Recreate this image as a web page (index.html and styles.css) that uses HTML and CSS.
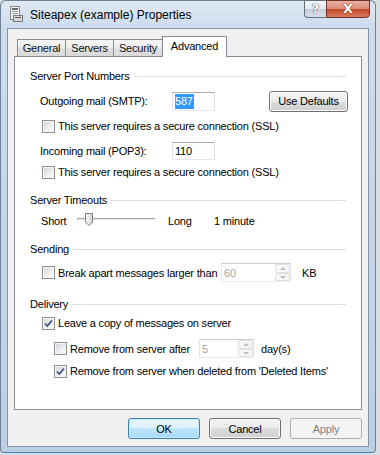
FILE: index.html
```html
<!DOCTYPE html>
<html>
	<head>
		<meta charset="UTF-8">
		<title>Siteapex (example) Properties</title>
		<link rel="stylesheet" href="styles.css">
	</head>
	<body>
		<div class="window">
			<div class="titlebar">
				<svg class="app-icon" width="13" height="16" viewBox="0 0 13 16">
					<rect x="0.5" y="0.5" width="9" height="13" fill="#f4f4f4" stroke="#8a8a8a"/>
					<rect x="2" y="2" width="6" height="2" fill="#6a6a6a"/>
					<rect x="2" y="5" width="6" height="1" fill="#9a9a9a"/>
					<rect x="2" y="7" width="6" height="1" fill="#9a9a9a"/>
					<rect x="3.5" y="9.5" width="9" height="6" fill="#d8d8d8" stroke="#7a7a7a"/>
					<rect x="5" y="11" width="6" height="1" fill="#5a5a5a"/>
				</svg>
				<span class="title">Siteapex (example) Properties</span>
				<div class="caption">
					<span class="cap-help">?</span>
					<span class="cap-close">X</span>
				</div>
			</div>
			<div class="client">
				<div class="tabs">
					<span class="tab tab-general">General</span>
					<span class="tab tab-servers">Servers</span>
					<span class="tab tab-security">Security</span>
					<span class="tab tab-advanced active">Advanced</span>
				</div>
				<div class="panel">
					<div class="group-head">Server Port Numbers</div>
					<div class="row row-smtp">
						<span class="port-label">Outgoing mail (SMTP):</span>
						<span class="field port"><span class="sel">587</span></span>
						<button class="btn btn-defaults">Use Defaults</button>
					</div>
					<div class="row check-row row-ssl1">
						<span class="cb"></span>
						<span>This server requires a secure connection (SSL)</span>
					</div>
					<div class="row row-pop">
						<span class="port-label">Incoming mail (POP3):</span>
						<span class="field port">110</span>
					</div>
					<div class="row check-row row-ssl2">
						<span class="cb"></span>
						<span>This server requires a secure connection (SSL)</span>
					</div>

					<div class="group-head head-timeouts">Server Timeouts</div>
					<div class="row row-slider">
						<span class="sl-short">Short</span>
						<div class="slider">
							<svg class="thumb" width="8" height="13" viewBox="0 0 8 13">
								<defs>
									<linearGradient id="tg" x1="0" y1="0" x2="1" y2="0">
										<stop offset="0" stop-color="#fbfbfb"/>
										<stop offset="1" stop-color="#d4d4d4"/>
									</linearGradient>
								</defs>
								<path d="M0.5 0.5 H7.5 V9 L4 12.5 L0.5 9 Z" fill="url(#tg)" stroke="#7c7c7c"/>
							</svg>
						</div>
						<span class="sl-long">Long</span>
						<span>1 minute</span>
					</div>

					<div class="group-head head-sending">Sending</div>
					<div class="row check-row row-break">
						<span class="cb"></span>
						<span class="break-label">Break apart messages larger than</span>
						<span class="field spin spin-kb">
							<span class="spin-val">60</span>
							<span class="spin-btns"><span class="spin-up"></span><span class="spin-down"></span></span>
						</span>
						<span class="unit-kb">KB</span>
					</div>

					<div class="group-head head-delivery">Delivery</div>
					<div class="row check-row row-leave">
						<span class="cb checked">
							<svg width="11" height="11" viewBox="0 0 11 11"><path d="M2 5.5 L4.3 8 L9 2.5" fill="none" stroke="#3c4f86" stroke-width="1.8"/></svg>
						</span>
						<span>Leave a copy of messages on server</span>
					</div>
					<div class="row sub-row row-after">
						<span class="cb"></span>
						<span class="after-label">Remove from server after</span>
						<span class="field spin spin-days">
							<span class="spin-val">5</span>
							<span class="spin-btns"><span class="spin-up"></span><span class="spin-down"></span></span>
						</span>
						<span class="unit-days">day(s)</span>
					</div>
					<div class="row sub-row row-deleted">
						<span class="cb checked">
							<svg width="11" height="11" viewBox="0 0 11 11"><path d="M2 5.5 L4.3 8 L9 2.5" fill="none" stroke="#3c4f86" stroke-width="1.8"/></svg>
						</span>
						<span>Remove from server when deleted from 'Deleted Items'</span>
					</div>
				</div>
				<div class="buttons">
					<button class="btn btn-ok">OK</button>
					<button class="btn">Cancel</button>
					<button class="btn btn-off">Apply</button>
				</div>
			</div>
		</div>
	</body>
</html>
```

FILE: styles.css
```css
html,body {
	margin: 0;
	padding: 0;
}
body {
	width: 380px;
	height: 455px;
	overflow: hidden;
	background-color: #d9dee3;
	font-family: "Liberation Sans", Arial, sans-serif;
	font-size: 11px;
	letter-spacing: -0.2px;
	color: #000;
}

/* window frame */
.window {
	width: 376px;
	height: 453px;
	box-sizing: border-box;
	border: 1px solid #6d8095;
	border-bottom-color: #3f86b3;
	border-radius: 6px 6px 4px 4px;
	background: linear-gradient(180deg, #dfe9f3 0, #cddced 26px, #c4d5e7 60%, #bcd0e4 100%);
	display: flex;
	flex-direction: column;
}
.titlebar {
	height: 27px;
	display: flex;
	align-items: flex-start;
}
.app-icon {
	margin: 5px 0 0 9px;
	flex: none;
}
.title {
	margin: 7px 0 0 7px;
	font-size: 12px;
	line-height: 15px;
	letter-spacing: 0;
}
.caption {
	display: flex;
	margin: -1px 5px 0 auto;
}
.cap-help,
.cap-close {
	height: 18px;
	box-sizing: border-box;
	text-align: center;
	font-family: "DejaVu Sans", sans-serif;
	font-weight: bold;
	color: #fff;
	line-height: 16px;
	letter-spacing: 0;
}
.cap-help {
	width: 22px;
	border: 1px solid #61707f;
	border-right: none;
	border-radius: 0 0 0 4px;
	background: linear-gradient(180deg, #f3f6f9 0, #e1e7ee 50%, #c6d0dc 50%, #d6dfe8 100%);
	font-size: 13px;
	text-shadow: 0 0 1px #333, 0 0 1px #333;
}
.cap-close {
	width: 44px;
	border: 1px solid #6a3328;
	border-radius: 0 0 4px 0;
	background: linear-gradient(180deg, #eab0a2 0, #dc8a77 50%, #c3452b 50%, #d87a5a 100%);
	font-size: 13px;
	text-shadow: 0 0 1px #5a1c10, 0 0 1px #5a1c10;
}

/* client area */
.client {
	height: 419px;
	margin: 0 6px;
	box-sizing: border-box;
	border: 1px solid #8596a9;
	background-color: #f0f0f0;
	padding: 7px 6px 7px;
	display: flex;
	flex-direction: column;
}
.tabs {
	height: 20px;
	padding-left: 4px;
	display: flex;
	align-items: flex-end;
	position: relative;
	z-index: 1;
}
.tab {
	height: 17px;
	box-sizing: border-box;
	margin-left: -1px;
	border: 1px solid #898c95;
	border-bottom: none;
	background: linear-gradient(180deg, #f5f5f5 0, #ececec 50%, #e1e1e1 50%, #d9d9d9 100%);
	text-align: center;
	line-height: 16px;
	color: #111;
}
.tab-general { width: 49px; }
.tab-servers { width: 49px; }
.tab-security { width: 50px; }
.tab-advanced { width: 65px; }
.tab.active {
	height: 21px;
	margin-bottom: -1px;
	background: #fff;
	line-height: 18px;
	color: #000;
}
.panel {
	height: 354px;
	box-sizing: border-box;
	border: 1px solid #898c95;
	background-color: #fff;
	padding: 12px 15px 0;
}

/* groups */
.group-head {
	height: 14px;
	display: flex;
	align-items: center;
}
.group-head:after {
	content: "";
	flex: 1;
	height: 1px;
	margin-left: 4px;
	background-color: #d5dfe5;
}
.head-timeouts { margin-top: 13px; }
.head-sending { margin-top: 11px; }
.head-delivery { margin-top: 15px; }

.row {
	display: flex;
	align-items: center;
	padding-left: 10px;
	height: 16px;
}
.check-row { padding-left: 12px; }
.sub-row { padding-left: 24px; }
.row-smtp { height: 20px; margin-top: 8px; }
.row-ssl1 { margin-top: 7px; }
.row-pop { height: 18px; margin-top: 8px; }
.row-ssl2 { margin-top: 4px; }
.row-slider { height: 20px; margin-top: 4px; padding-left: 11px; }
.row-break { height: 19px; margin-top: 7px; }
.row-leave { margin-top: 4px; }
.row-after { height: 19px; margin-top: 8px; }
.row-deleted { margin-top: 5px; }

.port-label {
	width: 132px;
	flex: none;
}
.field {
	box-sizing: border-box;
	height: 100%;
	border: 1px solid #abadb3;
	border-color: #abadb3 #dbdfe6 #e3e9ef #e2e3ea;
	background-color: #fff;
	display: flex;
	align-items: center;
	flex: none;
}
.port {
	width: 43px;
	padding-left: 2px;
}
.row-smtp .port { height: 19px; }
.sel {
	background-color: #3399ff;
	color: #fff;
	line-height: 15px;
	padding-right: 1px;
}
.btn {
	width: 72px;
	height: 21px;
	box-sizing: border-box;
	padding: 0;
	border: 1px solid #707070;
	border-radius: 3px;
	background: linear-gradient(180deg, #f4f4f4 0, #ebebeb 50%, #dddddd 50%, #cfcfcf 100%);
	box-shadow: inset 0 0 0 1px #fbfbfb;
	font-family: inherit;
	font-size: 11px;
	letter-spacing: inherit;
	color: #000;
}
.btn-defaults {
	width: 79px;
	margin: 0 -2px 0 auto;
}

/* checkbox */
.cb {
	width: 13px;
	height: 13px;
	box-sizing: border-box;
	flex: none;
	margin-right: 3px;
	border: 1px solid #8e8f8f;
	background: linear-gradient(135deg, #cfd2d6 0, #eef0f2 60%, #fbfbfb 100%);
	box-shadow: inset 0 0 0 1px #f6f6f6;
	display: flex;
	align-items: center;
	justify-content: center;
}

/* slider */
.sl-short {
	width: 36px;
	flex: none;
}
.slider {
	width: 78px;
	height: 3px;
	flex: none;
	position: relative;
	box-sizing: border-box;
	border: 1px solid #b4b4b4;
	border-color: #a9a9a9 #dadada #fafafa #b8b8b8;
	background-color: #e7eaea;
	margin-top: -3px;
}
.thumb {
	position: absolute;
	left: 7px;
	top: -6px;
}
.sl-long {
	width: 46px;
	margin-left: 13px;
	flex: none;
}

/* spin boxes */
.spin {
	border-color: #c9ccd1 #e3e5e8 #e9ecef #e3e5e8;
	color: #a3a3a3;
	padding-left: 2px;
	justify-content: space-between;
}
.spin-kb { width: 70px; }
.spin-days { width: 55px; }
.spin-btns {
	width: 15px;
	height: 17px;
	display: flex;
	flex-direction: column;
}
.spin-up,
.spin-down {
	flex: 1;
	box-sizing: border-box;
	border: 1px solid #dde0e4;
	border-radius: 2px;
	background-color: #f7f7f7;
	position: relative;
}
.spin-up:after,
.spin-down:after {
	content: "";
	position: absolute;
	left: 4px;
	border-left: 3px solid transparent;
	border-right: 3px solid transparent;
}
.spin-up:after {
	top: 2px;
	border-bottom: 3px solid #bcbcbc;
}
.spin-down:after {
	top: 2px;
	border-top: 3px solid #bcbcbc;
}
.break-label {
	width: 163px;
	flex: none;
}
.unit-kb { margin-left: 11px; }
.after-label {
	width: 129px;
	flex: none;
}
.unit-days { margin-left: 7px; }

/* bottom buttons */
.buttons {
	margin-top: 8px;
	display: flex;
	justify-content: flex-end;
	gap: 9px;
}
.btn-ok {
	border-color: #3c7fb1;
	background: linear-gradient(180deg, #eaf6fd 0, #d9f0fc 50%, #bee6fd 50%, #a7d9f5 100%);
	box-shadow: inset 0 0 0 1px #c4ecfa;
}
.btn-off {
	border-color: #adb2b5;
	background: #f4f4f4;
	box-shadow: none;
	color: #838383;
}
```
